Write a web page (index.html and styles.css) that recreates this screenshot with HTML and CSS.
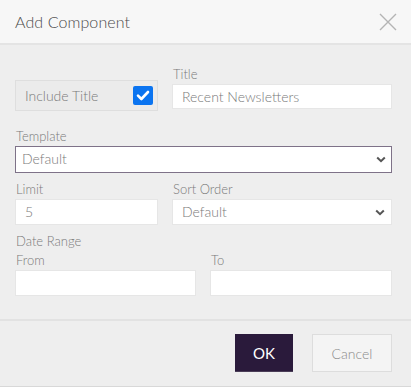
FILE: index.html
```html
<!DOCTYPE html>
<html>
<head>
<meta charset="utf-8">
<link rel="stylesheet" href="styles.css">
</head>
<body>
<div class="modal">
  <div class="header">
    <span class="title">Add Component</span>
    <svg class="close" width="18" height="18" viewBox="0 0 18 18"><path d="M1 1 L17 17 M17 1 L1 17" stroke="#b4b4b4" stroke-width="1.4" fill="none"/></svg>
  </div>
  <div class="body">
    <div class="row row-title">
      <div class="include">
        <span class="include-label">Include Title</span>
        <span class="check"><svg width="20" height="19" viewBox="0 0 20 19"><path d="M5 9.6 L8.4 13 L15 6" stroke="#fff" stroke-width="2.6" fill="none" stroke-linecap="round" stroke-linejoin="round"/></svg></span>
      </div>
      <div class="field">
        <label class="lbl">Title</label>
        <div class="input">Recent Newsletters</div>
      </div>
    </div>
    <div class="field field-template">
      <label class="lbl">Template</label>
      <div class="select select-active">Default<svg class="chev" width="10" height="7" viewBox="0 0 10 7"><path d="M1.2 1.5 L5 5.2 L8.8 1.5" stroke="#555" stroke-width="2" fill="none"/></svg></div>
    </div>
    <div class="row row-limit">
      <div class="field">
        <label class="lbl">Limit</label>
        <div class="input input-tall">5</div>
      </div>
      <div class="field">
        <label class="lbl">Sort Order</label>
        <div class="select">Default<svg class="chev" width="10" height="7" viewBox="0 0 10 7"><path d="M1.2 1.5 L5 5.2 L8.8 1.5" stroke="#555" stroke-width="2" fill="none"/></svg></div>
      </div>
    </div>
    <div class="date">
      <label class="lbl">Date Range</label>
      <div class="row row-date">
        <div class="field">
          <label class="lbl">From</label>
          <div class="input input-tall"></div>
        </div>
        <div class="field">
          <label class="lbl">To</label>
          <div class="input input-tall"></div>
        </div>
      </div>
    </div>
  </div>
  <div class="footer">
    <button class="btn btn-ok">OK</button>
    <button class="btn btn-cancel">Cancel</button>
  </div>
</div>
</body>
</html>
```
FILE: styles.css
```css
* { box-sizing: border-box; }
html, body { margin: 0; padding: 0; }
body {
  width: 411px;
  height: 387px;
  background: #eeeeee;
  font-family: Lato, "Open Sans", sans-serif;
  font-weight: 300;
  overflow: hidden;
}
.modal {
  width: 411px;
  height: 387px;
  display: flex;
  flex-direction: column;
  background: #eeeeee;
  border-bottom: 1px solid #d8d8d8;
}
.header {
  height: 45px;
  background: #f7f7f7;
  border-bottom: 2px solid #e4e4e4;
  display: flex;
  align-items: center;
  justify-content: space-between;
  padding: 0 14px 0 15px;
}
.title {
  font-size: 16px;
  color: #4a4a4a;
  font-weight: 300;
  letter-spacing: 0.1px;
}
.close { display: block; }
.body {
  padding: 21px 19px 0 15px;
  height: 276px;
  border-bottom: 2px solid #e2e2e2;
}
.row {
  display: grid;
  gap: 14px;
}
.row-title { grid-template-columns: 143px 1fr; }
.row-limit { grid-template-columns: 143px 1fr; margin-top: 8px; }
.row-date { grid-template-columns: 181px 1fr; }
.lbl {
  display: block;
  font-size: 13px;
  line-height: 16px;
  color: #7a7a7a;
  margin-bottom: 2px;
  padding-left: 1px;
}
.include {
  margin-top: 14px;
  height: 31px;
  border: 1px solid #dedede;
  background: #ebebeb;
  display: flex;
  align-items: center;
  justify-content: space-between;
  padding: 0 4px 0 9px;
}
.include-label {
  font-size: 14px;
  color: #7a7a7a;
}
.check {
  width: 20px;
  height: 19px;
  background: #0b74f0;
  border-radius: 2px;
  display: block;
}
.check svg { display: block; }
.input {
  height: 25px;
  background: #fff;
  border: 1px solid #e6e6e6;
  font-size: 14px;
  color: #7a7a7a;
  padding: 0 9px;
  line-height: 23px;
}
.input-tall { height: 26px; line-height: 24px; }
.field-template { margin-top: 17px; }
.select {
  position: relative;
  height: 26px;
  background: #fff;
  border: 1px solid #e6e6e6;
  font-size: 14px;
  color: #7a7a7a;
  padding: 0 9px;
  line-height: 24px;
}
.select-active {
  height: 27px;
  border: 1.5px solid #7e7288;
  padding: 0 6px;
}
.chev {
  position: absolute;
  right: 6px;
  top: 9px;
}
.select-active .chev { right: 5px; }
.date { margin-top: 8px; }
.date > .lbl { margin-bottom: 3px; }
.footer {
  flex: 1;
  display: flex;
  justify-content: flex-end;
  align-items: flex-start;
  padding: 13px 19px 0 0;
  gap: 19px;
}
.btn {
  font-family: Lato, "Open Sans", sans-serif;
  font-size: 15px;
  font-weight: 400;
  cursor: pointer;
}
.btn-ok {
  width: 58px;
  height: 38px;
  background: #2a1a3b;
  color: #fff;
  border: none;
  border-bottom: 1px solid #4a3d57;
}
.btn-cancel {
  width: 80px;
  height: 38px;
  background: #f4f4f4;
  color: #8a8a8a;
  border: 1px solid #dddddd;
  font-size: 14px;
  font-weight: 300;
}
```
